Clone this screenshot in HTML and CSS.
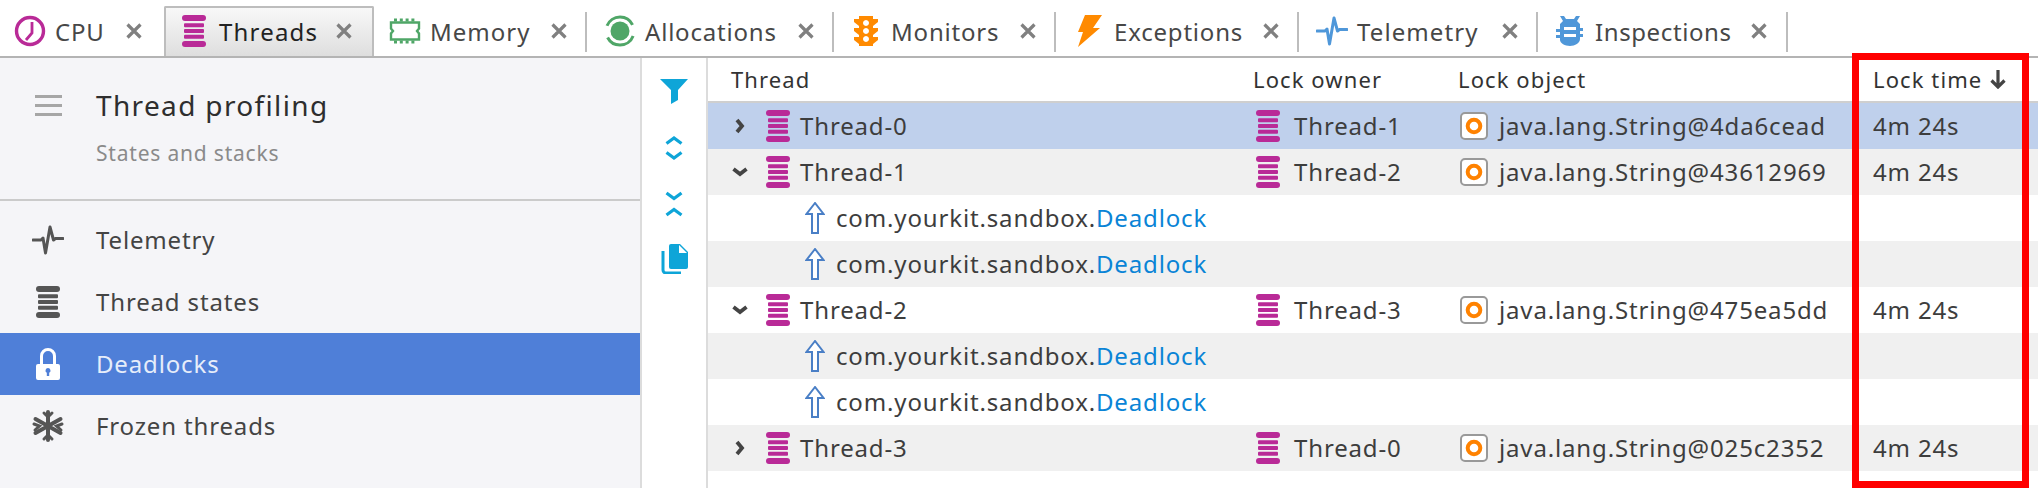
FILE: index.html
```html
<!DOCTYPE html>
<html lang="en">
<head>
<meta charset="utf-8">
<title>Thread profiling</title>
<link rel="stylesheet" href="styles.css">
</head>
<body>
<svg class="defs" xmlns="http://www.w3.org/2000/svg">
  <symbol id="thread" viewBox="0 0 24 32"><g fill="currentColor"><rect width="24" height="6" rx="3"/><rect x="2" y="8.200" width="20" height="4" rx="1"/><rect x="2" y="14" width="20" height="4" rx="1"/><rect x="2" y="19.800" width="20" height="4" rx="1"/><rect y="26" width="24" height="6" rx="3"/></g></symbol>
  <symbol id="close" viewBox="0 0 16 16"><path d="M1.500 1.500l13 13M14.500 1.500l-13 13" stroke="#808080" stroke-width="3.200" fill="none"/></symbol>
  <symbol id="pulse" viewBox="0 0 32 30"><path d="M1 15h8l2-2 2.500 15L18 2l3.500 13 2-1.500H31" fill="none" stroke="currentColor" stroke-width="3" stroke-linecap="round" stroke-linejoin="round"/></symbol>
  <symbol id="up" viewBox="0 0 20 32"><path d="M10 1L1.500 12H7v19h6V12h5.500z" fill="#fff" stroke="#4a7fc6" stroke-width="2"/></symbol>
  <symbol id="badge" viewBox="0 0 28 28"><rect x="1" y="1" width="26" height="26" rx="4" fill="#fff" stroke="#999" stroke-width="2"/><circle cx="14" cy="14" r="6.300" fill="none" stroke="#ff8200" stroke-width="4"/></symbol>
  <symbol id="chev-r" viewBox="0 0 12 16"><path d="M3 2l5 6-5 6" fill="none" stroke="#444" stroke-width="3.800"/></symbol>
  <symbol id="chev-d" viewBox="0 0 16 12"><path d="M1.500 3l6.500 5 6.500-5" fill="none" stroke="#444" stroke-width="3.800"/></symbol>
</svg>

<nav class="tabbar">
  <div class="tab tab-cpu tab-nosep"><svg class="tab-icon" viewBox="0 0 32 32"><circle cx="16" cy="16" r="13.500" fill="none" stroke="#b92a97" stroke-width="3.400"/><path d="M18 7v11l-6 7" fill="none" stroke="#b92a97" stroke-width="2.800"/></svg><span class="tab-label">CPU</span><svg class="tab-close"><use href="#close"/></svg></div>
  <div class="tab tab-threads tab-active"><svg class="tab-icon icon-magenta"><use href="#thread"/></svg><span class="tab-label tab-label-strong">Threads</span><svg class="tab-close"><use href="#close"/></svg></div>
  <div class="tab tab-memory"><svg class="tab-icon" viewBox="0 0 32 32"><path d="M2 7.500h28v6l-2 2.500 2 2.500v6H2v-6L4 16l-2-2.500z" fill="none" stroke="#4fa667" stroke-width="2.400"/><path d="M5 5h23M5 27h23" fill="none" stroke="#4fa667" stroke-width="3" stroke-dasharray="3 2.800"/></svg><span class="tab-label">Memory</span><svg class="tab-close"><use href="#close"/></svg></div>
  <div class="tab tab-alloc"><svg class="tab-icon" viewBox="0 0 32 32"><circle cx="16" cy="16" r="9.500" fill="#4fa667"/><circle cx="16" cy="16" r="14" fill="none" stroke="#4fa667" stroke-width="3" stroke-dasharray="32 12" stroke-dashoffset="-5"/></svg><span class="tab-label">Allocations</span><svg class="tab-close"><use href="#close"/></svg></div>
  <div class="tab tab-mon"><svg class="tab-icon" viewBox="0 0 32 32"><path fill-rule="evenodd" d="M9 1h14v3h5v3l-5 4v2h5v3l-5 4v2h5v3l-5 4v2H9v-2l-5-4v-3h5v-2l-5-4v-3h5v-2L4 7V4h5zM16 5a3 3 0 1 0 .01 0zM16 13a3 3 0 1 0 .01 0zM16 21a3 3 0 1 0 .01 0z" fill="#ff8a00"/></svg><span class="tab-label">Monitors</span><svg class="tab-close"><use href="#close"/></svg></div>
  <div class="tab tab-exc"><svg class="tab-icon" viewBox="0 0 32 32"><path d="M12 0h17l-9 13h7L5 32l5-15H5z" fill="#ff8a00"/></svg><span class="tab-label">Exceptions</span><svg class="tab-close"><use href="#close"/></svg></div>
  <div class="tab tab-tel"><svg class="tab-icon tab-pulse"><use href="#pulse"/></svg><span class="tab-label">Telemetry</span><svg class="tab-close"><use href="#close"/></svg></div>
  <div class="tab tab-insp"><svg class="tab-icon" viewBox="0 0 32 32"><path fill-rule="evenodd" d="M6 1l4 0 2 3h8l2-3h4l-3 5 3 3v4h3v3h-3v3h3v3h-3v2c0 4-5 7-10 7S6 28 6 25v-2H2v-3h4v-3H2v-3h4v-5l3-3zM10 12v3h12v-3zM10 19v3h12v-3z" fill="#4f97d9"/></svg><span class="tab-label">Inspections</span><svg class="tab-close"><use href="#close"/></svg></div>
</nav>

<main class="workspace">
  <aside class="sidebar">
    <header class="side-head">
      <svg class="burger" viewBox="0 0 27 21"><path d="M0 1.500h27M0 10.500h27M0 19.500h27" stroke="#a6a6a6" stroke-width="3"/></svg>
      <div class="side-titles">
        <h1 class="side-title">Thread profiling</h1>
        <p class="side-sub">States and stacks</p>
      </div>
    </header>
    <ul class="side-nav">
      <li class="nav-item"><svg class="nav-icon"><use href="#pulse"/></svg><span>Telemetry</span></li>
      <li class="nav-item"><svg class="nav-icon"><use href="#thread"/></svg><span>Thread states</span></li>
      <li class="nav-item nav-active"><svg class="nav-icon" viewBox="0 0 32 32"><path d="M9.500 18V8a6.500 6.500 0 0 1 13 0v10" fill="none" stroke="#fff" stroke-width="3"/><path fill-rule="evenodd" d="M6 16h20a2 2 0 0 1 2 2v12a2 2 0 0 1-2 2H6a2 2 0 0 1-2-2V18a2 2 0 0 1 2-2zM16 20a2.500 2.500 0 0 0-1.200 4.700V28h2.400v-3.300A2.500 2.500 0 0 0 16 20z" fill="#fff"/></svg><span>Deadlocks</span></li>
      <li class="nav-item"><svg class="nav-icon" viewBox="0 0 32 32"><g stroke="currentColor" stroke-width="4" fill="none" stroke-linecap="round"><path d="M16 2v28M3.500 9l25 14M28.500 9l-25 14"/><path d="M12 3l4 4 4-4M12 29l4-4 4 4M2 14l5.500 2L3 20M30 14l-5.500 2 4.500 4" stroke-width="3"/></g></svg><span>Frozen threads</span></li>
    </ul>
  </aside>

  <div class="toolbar">
    <svg class="tool tool-filter" viewBox="0 0 28 25"><path d="M0 0h28L18 11v10l-7 4V11z" fill="#0ea5d8"/></svg>
    <svg class="tool tool-expand" viewBox="0 0 24 26"><path d="M4.500 8.500L12 3l7.500 5.500M4.500 17.500L12 23l7.500-5.500" fill="none" stroke="#0ea5d8" stroke-width="3.200"/></svg>
    <svg class="tool tool-collapse" viewBox="0 0 24 28"><path d="M4.500 3L12 8.500 19.500 3M4.500 25l7.500-5.500 7.500 5.500" fill="none" stroke="#0ea5d8" stroke-width="3.200"/></svg>
    <svg class="tool tool-copy" viewBox="0 0 27 30"><path d="M10 0h9l8 8v15a2 2 0 0 1-2 2H10a2 2 0 0 1-2-2V2a2 2 0 0 1 2-2z" fill="#0ea5d8"/><path d="M18 1v8h8" fill="#fff"/><path d="M2 7v19a3 3 0 0 0 3 3h15" fill="none" stroke="#0ea5d8" stroke-width="3"/></svg>
  </div>

  <section class="table">
    <div class="row row-head">
      <div class="cell">Thread</div>
      <div class="cell">Lock owner</div>
      <div class="cell">Lock object</div>
      <div class="cell">Lock time <svg class="sort" viewBox="0 0 16 19"><path d="M8 0v17M1.500 10.500L8 17l6.500-6.500" fill="none" stroke="#444" stroke-width="3.200"/></svg></div>
    </div>

    <div class="row row-selected">
      <div class="cell cell-tree"><svg class="chev-r"><use href="#chev-r"/></svg><svg class="ticon"><use href="#thread"/></svg>Thread-0</div>
      <div class="cell cell-owner"><svg class="ticon"><use href="#thread"/></svg>Thread-1</div>
      <div class="cell cell-obj"><svg class="badge"><use href="#badge"/></svg>java.lang.String@4da6cead</div>
      <div class="cell">4m 24s</div>
    </div>
    <div class="row row-grey">
      <div class="cell cell-tree"><svg class="chev-d"><use href="#chev-d"/></svg><svg class="ticon"><use href="#thread"/></svg>Thread-1</div>
      <div class="cell cell-owner"><svg class="ticon"><use href="#thread"/></svg>Thread-2</div>
      <div class="cell cell-obj"><svg class="badge"><use href="#badge"/></svg>java.lang.String@43612969</div>
      <div class="cell">4m 24s</div>
    </div>
    <div class="row">
      <div class="cell cell-child"><svg class="up"><use href="#up"/></svg>com.yourkit.sandbox.<span class="link">Deadlock</span></div>
    </div>
    <div class="row row-grey">
      <div class="cell cell-child"><svg class="up"><use href="#up"/></svg>com.yourkit.sandbox.<span class="link">Deadlock</span></div>
    </div>
    <div class="row">
      <div class="cell cell-tree"><svg class="chev-d"><use href="#chev-d"/></svg><svg class="ticon"><use href="#thread"/></svg>Thread-2</div>
      <div class="cell cell-owner"><svg class="ticon"><use href="#thread"/></svg>Thread-3</div>
      <div class="cell cell-obj"><svg class="badge"><use href="#badge"/></svg>java.lang.String@475ea5dd</div>
      <div class="cell">4m 24s</div>
    </div>
    <div class="row row-grey">
      <div class="cell cell-child"><svg class="up"><use href="#up"/></svg>com.yourkit.sandbox.<span class="link">Deadlock</span></div>
    </div>
    <div class="row">
      <div class="cell cell-child"><svg class="up"><use href="#up"/></svg>com.yourkit.sandbox.<span class="link">Deadlock</span></div>
    </div>
    <div class="row row-grey">
      <div class="cell cell-tree"><svg class="chev-r"><use href="#chev-r"/></svg><svg class="ticon"><use href="#thread"/></svg>Thread-3</div>
      <div class="cell cell-owner"><svg class="ticon"><use href="#thread"/></svg>Thread-0</div>
      <div class="cell cell-obj"><svg class="badge"><use href="#badge"/></svg>java.lang.String@025c2352</div>
      <div class="cell">4m 24s</div>
    </div>
  </section>
</main>

<div class="highlight"></div>
</body>
</html>
```
FILE: styles.css
```css
* { box-sizing: border-box; }
html, body { margin: 0; height: 488px; overflow: hidden; background: #fff; }
body {
  font-family: "Noto Sans", "Open Sans", sans-serif;
  font-size: 24px;
  color: #3d3d3d;
  letter-spacing: 0.85px;
}
.defs { display: none; }

/* tabs */
.tabbar {
  display: flex;
  align-items: flex-end;
  height: 58px;
  border-bottom: 2px solid #b4b4b4;
  letter-spacing: 0.8px;
}
.tab {
  display: flex;
  align-items: center;
  height: 40px;
  margin-bottom: 4px;
  padding: 0 20px 2px 16px;
  border-right: 2px solid #bdbdbd;
}
.tab-nosep { border-right: 0; }
.tab-active {
  height: 50px;
  margin-bottom: 0;
  padding-bottom: 2px;
  border: 2px solid #bdbdbd;
  border-bottom: 0;
  border-radius: 2px 2px 0 0;
  background: linear-gradient(#f8f8f8, #dedede);
  letter-spacing: 1.2px;
}
.tab-cpu { width: 164px; padding-left: 14px; padding-right: 22px; }
.tab-threads { width: 210px; padding-left: 12px; }
.tab-memory { width: 213px; padding-left: 15px; padding-right: 18px; letter-spacing: 1px; }
.tab-alloc { width: 247px; padding-left: 17px; padding-right: 18px; }
.tab-mon { width: 222px; padding-right: 18px; }
.tab-exc { width: 243px; padding-left: 17px; padding-right: 18px; }
.tab-tel { width: 239px; padding-left: 17px; padding-right: 18px; letter-spacing: 1.1px; }
.tab-insp { width: 250px; padding-right: 19px; letter-spacing: 0.6px; }
.tab-icon { flex: none; width: 32px; height: 32px; margin-right: 9px; }
.icon-magenta { color: #b92a97; }
.tab-pulse { color: #4f97d9; }
.tab-label { white-space: nowrap; color: #474747; }
.tab-label-strong { color: #222; }
.tab-close { flex: none; width: 16px; height: 16px; margin-left: auto; }

/* layout */
.workspace { display: flex; height: 430px; }
.sidebar {
  flex: none;
  width: 642px;
  background: #f5f5f8;
  border-right: 2px solid #dcdcdc;
}
.side-head {
  display: flex;
  height: 143px;
  padding: 29px 0 0 35px;
  border-bottom: 2px solid #cbcbcb;
}
.burger { flex: none; width: 27px; height: 21px; margin: 8px 34px 0 0; }
.side-title { margin: 0; font-size: 28px; font-weight: 400; line-height: 36px; color: #2e2e2e; letter-spacing: 1.35px; }
.side-sub { margin: 15px 0 0; font-size: 21px; line-height: 30px; color: #8a8a8a; letter-spacing: 0.8px; }
.side-nav { margin: 0; padding: 8px 0 0; list-style: none; }
.nav-item {
  display: flex;
  align-items: center;
  height: 62px;
  padding: 0 0 2px 32px;
  color: #444;
}
.nav-icon { flex: none; width: 32px; height: 32px; margin: 2px 32px 0 0; color: #555; }
.nav-active { background: #4f7fd8; color: #e6edfa; }

.toolbar {
  flex: none;
  display: flex;
  flex-direction: column;
  align-items: center;
  width: 66px;
  padding-top: 21px;
  border-right: 2px solid #dcdcdc;
}
.tool { flex: none; display: block; }
.tool-filter { width: 28px; height: 25px; }
.tool-expand { width: 24px; height: 26px; margin-top: 31px; }
.tool-collapse { width: 24px; height: 28px; margin-top: 29px; }
.tool-copy { width: 27px; height: 30px; margin-top: 26px; }

/* table */
.table { flex: 1; min-width: 0; }
.row {
  display: grid;
  grid-template-columns: 532px 205px 415px 178px;
  height: 46px;
}
.row-head {
  height: 45px;
  font-size: 22px;
  border-bottom: 2px solid #cfcfcf;
  color: #333;
  letter-spacing: 1.1px;
}
.row-selected { background: #bfd0ec; }
.row-grey { background: #f0f0f0; }
.cell {
  display: flex;
  align-items: center;
  padding: 0 0 2px 13px;
  white-space: nowrap;
}
.row-head .cell:first-child { padding-left: 23px; }
.cell-tree { padding-left: 0; }
.cell-child { grid-column: 1 / 3; padding-left: 97px; }
.cell-owner { padding-left: 16px; }
.cell-obj { padding-left: 15px; }
.chev-r { flex: none; width: 12px; height: 16px; margin: 2px 20px 0 26px; }
.chev-d { flex: none; width: 16px; height: 12px; margin: 2px 18px 0 24px; }
.ticon { flex: none; width: 24px; height: 32px; margin: 2px 10px 0 0; color: #b92a97; }
.cell-owner .ticon { margin-right: 14px; }
.badge { flex: none; width: 28px; height: 28px; margin: 2px 11px 0 0; }
.up { flex: none; width: 20px; height: 32px; margin: 2px 11px 0 0; }
.link { color: #0a84d6; }
.sort { width: 16px; height: 19px; margin: 2px 0 0 8px; }

/* annotation */
.highlight {
  position: absolute;
  left: 1852px;
  top: 53px;
  width: 177px;
  height: 435px;
  border: 7px solid #ff0000;
  pointer-events: none;
}
```
